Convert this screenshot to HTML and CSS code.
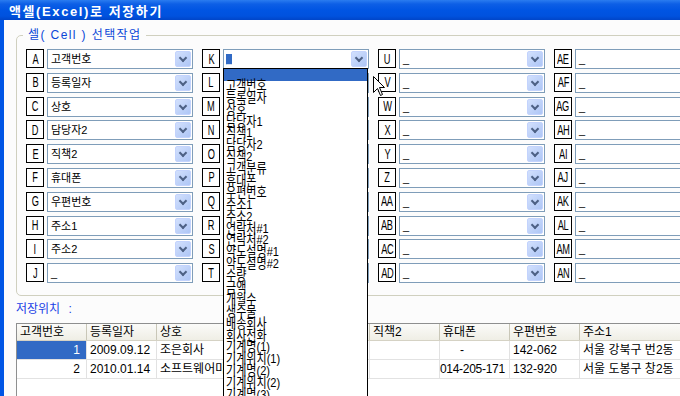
FILE: index.html
```html
<!DOCTYPE html>
<html lang="ko">
<head>
<meta charset="utf-8">
<title>액셀(Excel)로 저장하기</title>
<link rel="stylesheet" href="styles.css">
</head>
<body>
<div class="window">
  <div class="titlebar"><span class="title">액셀(Excel)로 저장하기</span></div>
  <div class="frame-body">
    <div class="frame-left"></div>
    <div class="client">
      <fieldset class="group">
        <legend>셀( Cell ) 선택작업</legend>
        <div class="fields">
          <div class="field"><span class="key"><span>A</span></span><div class="combo"><span class="val">고객번호</span><span class="btn"></span></div></div>
          <div class="field"><span class="key"><span>B</span></span><div class="combo"><span class="val">등록일자</span><span class="btn"></span></div></div>
          <div class="field"><span class="key"><span>C</span></span><div class="combo"><span class="val">상호</span><span class="btn"></span></div></div>
          <div class="field"><span class="key"><span>D</span></span><div class="combo"><span class="val">담당자2</span><span class="btn"></span></div></div>
          <div class="field"><span class="key"><span>E</span></span><div class="combo"><span class="val">직책2</span><span class="btn"></span></div></div>
          <div class="field"><span class="key"><span>F</span></span><div class="combo"><span class="val">휴대폰</span><span class="btn"></span></div></div>
          <div class="field"><span class="key"><span>G</span></span><div class="combo"><span class="val">우편번호</span><span class="btn"></span></div></div>
          <div class="field"><span class="key"><span>H</span></span><div class="combo"><span class="val">주소1</span><span class="btn"></span></div></div>
          <div class="field"><span class="key"><span>I</span></span><div class="combo"><span class="val">주소2</span><span class="btn"></span></div></div>
          <div class="field"><span class="key"><span>J</span></span><div class="combo"><span class="val">_</span><span class="btn"></span></div></div>

          <div class="field"><span class="key"><span>K</span></span><div class="combo open"><span class="val"><span class="hl">_</span></span><span class="btn"></span>
            <div class="dropdown">
              <div class="opt sel"></div>
              <div class="opt"><span>고객번호</span></div>
              <div class="opt"><span>등록일자</span></div>
              <div class="opt"><span>상호</span></div>
              <div class="opt"><span>담당자1</span></div>
              <div class="opt"><span>직책1</span></div>
              <div class="opt"><span>담당자2</span></div>
              <div class="opt"><span>직책2</span></div>
              <div class="opt"><span>고객분류</span></div>
              <div class="opt"><span>휴대폰</span></div>
              <div class="opt"><span>우편번호</span></div>
              <div class="opt"><span>주소1</span></div>
              <div class="opt"><span>주소2</span></div>
              <div class="opt"><span>연락처#1</span></div>
              <div class="opt"><span>연락처#2</span></div>
              <div class="opt"><span>약도설명#1</span></div>
              <div class="opt"><span>약도설명#2</span></div>
              <div class="opt"><span>수량</span></div>
              <div class="opt"><span>금액</span></div>
              <div class="opt"><span>개월수</span></div>
              <div class="opt"><span>생수물</span></div>
              <div class="opt"><span>배송회사</span></div>
              <div class="opt"><span>회사전화</span></div>
              <div class="opt"><span>기계명(1)</span></div>
              <div class="opt"><span>기계위치(1)</span></div>
              <div class="opt"><span>기계명(2)</span></div>
              <div class="opt"><span>기계위치(2)</span></div>
              <div class="opt"><span>기계명(3)</span></div>
              <div class="opt"><span>기계위치(3)</span></div>
            </div>
          </div></div>
          <div class="field"><span class="key"><span>L</span></span><div class="combo"><span class="val">_</span><span class="btn"></span></div></div>
          <div class="field"><span class="key"><span>M</span></span><div class="combo"><span class="val">_</span><span class="btn"></span></div></div>
          <div class="field"><span class="key"><span>N</span></span><div class="combo"><span class="val">_</span><span class="btn"></span></div></div>
          <div class="field"><span class="key"><span>O</span></span><div class="combo"><span class="val">_</span><span class="btn"></span></div></div>
          <div class="field"><span class="key"><span>P</span></span><div class="combo"><span class="val">_</span><span class="btn"></span></div></div>
          <div class="field"><span class="key"><span>Q</span></span><div class="combo"><span class="val">_</span><span class="btn"></span></div></div>
          <div class="field"><span class="key"><span>R</span></span><div class="combo"><span class="val">_</span><span class="btn"></span></div></div>
          <div class="field"><span class="key"><span>S</span></span><div class="combo"><span class="val">_</span><span class="btn"></span></div></div>
          <div class="field"><span class="key"><span>T</span></span><div class="combo"><span class="val">_</span><span class="btn"></span></div></div>

          <div class="field"><span class="key"><span>U</span></span><div class="combo"><span class="val">_</span><span class="btn"></span></div></div>
          <div class="field"><span class="key"><span>V</span></span><div class="combo"><span class="val">_</span><span class="btn"></span></div></div>
          <div class="field"><span class="key"><span>W</span></span><div class="combo"><span class="val">_</span><span class="btn"></span></div></div>
          <div class="field"><span class="key"><span>X</span></span><div class="combo"><span class="val">_</span><span class="btn"></span></div></div>
          <div class="field"><span class="key"><span>Y</span></span><div class="combo"><span class="val">_</span><span class="btn"></span></div></div>
          <div class="field"><span class="key"><span>Z</span></span><div class="combo"><span class="val">_</span><span class="btn"></span></div></div>
          <div class="field"><span class="key"><span>AA</span></span><div class="combo"><span class="val">_</span><span class="btn"></span></div></div>
          <div class="field"><span class="key"><span>AB</span></span><div class="combo"><span class="val">_</span><span class="btn"></span></div></div>
          <div class="field"><span class="key"><span>AC</span></span><div class="combo"><span class="val">_</span><span class="btn"></span></div></div>
          <div class="field"><span class="key"><span>AD</span></span><div class="combo"><span class="val">_</span><span class="btn"></span></div></div>

          <div class="field"><span class="key"><span>AE</span></span><div class="combo"><span class="val">_</span><span class="btn"></span></div></div>
          <div class="field"><span class="key"><span>AF</span></span><div class="combo"><span class="val">_</span><span class="btn"></span></div></div>
          <div class="field"><span class="key"><span>AG</span></span><div class="combo"><span class="val">_</span><span class="btn"></span></div></div>
          <div class="field"><span class="key"><span>AH</span></span><div class="combo"><span class="val">_</span><span class="btn"></span></div></div>
          <div class="field"><span class="key"><span>AI</span></span><div class="combo"><span class="val">_</span><span class="btn"></span></div></div>
          <div class="field"><span class="key"><span>AJ</span></span><div class="combo"><span class="val">_</span><span class="btn"></span></div></div>
          <div class="field"><span class="key"><span>AK</span></span><div class="combo"><span class="val">_</span><span class="btn"></span></div></div>
          <div class="field"><span class="key"><span>AL</span></span><div class="combo"><span class="val">_</span><span class="btn"></span></div></div>
          <div class="field"><span class="key"><span>AM</span></span><div class="combo"><span class="val">_</span><span class="btn"></span></div></div>
          <div class="field"><span class="key"><span>AN</span></span><div class="combo"><span class="val">_</span><span class="btn"></span></div></div>
        </div>
      </fieldset>

      <div class="save-label">저장위치 :</div>

      <div class="listview">
        <div class="lv-head">
          <div>고객번호</div><div>등록일자</div><div>상호</div><div>담당자2</div><div>직책2</div><div>직책2</div><div>휴대폰</div><div>우편번호</div><div>주소1</div>
        </div>
        <div class="lv-row">
          <div class="num selected">1</div><div>2009.09.12</div><div>조은회사</div><div></div><div></div><div></div><div class="dash">-</div><div>142-062</div><div>서울 강북구 번2동</div>
        </div>
        <div class="lv-row">
          <div class="num">2</div><div>2010.01.14</div><div>소프트웨어마을</div><div></div><div></div><div></div><div class="tight">014-205-171</div><div>132-920</div><div>서울 도봉구 창2동</div>
        </div>
      </div>
    </div>
  </div>
  <svg class="cursor" width="13" height="21" viewBox="0 0 13 21"><path d="M0.5 0.5 L0.5 16.5 L4.5 12.5 L7.5 19.5 L9.5 18.5 L6.5 11.5 L11.5 11.5 Z" fill="#fff" stroke="#000" stroke-width="1"/></svg>
</div>
</body>
</html>
```

FILE: styles.css
```css
* { box-sizing: border-box; }

html, body {
  margin: 0;
  width: 680px;
  height: 396px;
  overflow: hidden;
}

body {
  font-family: "Liberation Sans", "Noto Sans CJK KR", sans-serif;
  font-size: 12px;
  color: #000;
  background: #fcfcfc;
}

.window {
  position: relative;
  display: flex;
  flex-direction: column;
  height: 396px;
}

.titlebar {
  flex: none;
  height: 20px;
  display: flex;
  align-items: center;
  padding-left: 9px;
  background: linear-gradient(#2a7cf0 0%, #0d5fe6 20%, #0055e3 50%, #0052de 80%, #0045c8 100%);
}

.title {
  color: #fff;
  font-weight: bold;
  font-size: 13px;
  letter-spacing: 1.6px;
}

.frame-body {
  flex: 1;
  display: flex;
  min-height: 0;
}

.frame-left {
  width: 4px;
  flex: none;
  background: #0055e5;
}

.client {
  flex: 1;
  min-width: 0;
  padding: 8px 0 0 12px;
  overflow: hidden;
}

.group {
  margin: 0;
  width: 760px;
  border: 1px solid #d0d0bf;
  border-radius: 5px;
  padding: 7px 0 12px 9px;
}

.group legend {
  padding: 0 5px;
  margin-left: -3px;
  color: #0a46d8;
  font-size: 12px;
  line-height: 14px;
  letter-spacing: 1.4px;
}

.fields {
  display: grid;
  grid-auto-flow: column;
  grid-template-rows: repeat(10, 20px);
  grid-template-columns: repeat(4, 167px);
  column-gap: 9px;
  row-gap: 3.8px;
}

.field {
  display: flex;
  align-items: flex-start;
  gap: 3px;
}

.key {
  flex: none;
  width: 18px;
  height: 19px;
  border: 1px solid #000;
  background: #fff;
  display: flex;
  align-items: center;
  justify-content: center;
  overflow: hidden;
}

.key span {
  display: inline-block;
  font-size: 14px;
  line-height: 16px;
  transform: scaleX(0.66);
  letter-spacing: -0.5px;
}

.combo {
  position: relative;
  flex: none;
  width: 146px;
  height: 20px;
  border: 1px solid #7f9db9;
  background: #fff;
  display: flex;
  align-items: center;
  justify-content: space-between;
  padding: 0 1px 0 3px;
}

.val {
  font-size: 11px;
  line-height: 14px;
  white-space: nowrap;
}

.hl {
  display: inline-block;
  background: #316ac5;
  color: #fff;
  width: 6px;
  height: 11px;
  line-height: 10px;
  margin-left: -1px;
}

.btn {
  position: relative;
  flex: none;
  width: 16px;
  height: 16px;
  border: 1px solid #c3d3fd;
  border-radius: 2px;
  background: linear-gradient(135deg, #d2e0fd 0%, #bcd0f8 60%, #aec6f6 100%);
}

.btn::after {
  content: "";
  position: absolute;
  left: 4px;
  top: 3px;
  width: 4px;
  height: 4px;
  border-right: 2px solid #4d6185;
  border-bottom: 2px solid #4d6185;
  transform: rotate(45deg);
}

.dropdown {
  position: absolute;
  top: 100%;
  left: -1px;
  width: 145px;
  height: 340px;
  border: 1px solid #000;
  background: #fff;
  z-index: 5;
  overflow: hidden;
}

.opt {
  height: 11.9px;
  line-height: 11.9px;
  font-family: "Liberation Sans", "Noto Sans CJK KR", sans-serif;
  font-size: 12px;
  padding-left: 2px;
  white-space: nowrap;
}

.opt span {
  display: inline-block;
  transform: scale(0.92, 1.12);
  transform-origin: left center;
}

.opt.sel {
  background: #316ac5;
}

.save-label {
  margin-top: 5px;
  line-height: 16px;
  font-size: 12px;
  color: #1a3fe6;
  word-spacing: 5px;
}

.listview {
  margin-top: 6px;
  width: 760px;
  height: 120px;
  background: #fff;
  border-top: 1px solid #8e8f8f;
  border-left: 1px solid #8e8f8f;
}

.lv-head,
.lv-row {
  display: grid;
  grid-template-columns: 70px 70px 71px 71px 71px 70px 70px 70px 200px;
}

.lv-head {
  height: 17px;
  background: linear-gradient(#fbfbf9, #efeee5);
  border-bottom: 1px solid #d5d2c4;
}

.lv-head > div {
  border-right: 1px solid #c9c7b8;
  padding-left: 3px;
  line-height: 16px;
  white-space: nowrap;
  overflow: hidden;
}

.lv-row {
  height: 19px;
  border-bottom: 1px solid #e2e2e2;
}

.lv-row > div {
  border-right: 1px solid #e2e2e2;
  padding: 0 3px;
  line-height: 18px;
  white-space: nowrap;
  overflow: hidden;
}

.lv-row > .num {
  text-align: right;
  padding-right: 6px;
}

.lv-row > .selected {
  background: #316ac5;
  color: #fff;
}

.lv-row > .dash {
  padding-left: 20px;
}

.lv-row > .tight {
  padding: 0;
  letter-spacing: -0.3px;
}

.cursor {
  position: absolute;
  left: 373px;
  top: 76px;
  z-index: 10;
}
```
